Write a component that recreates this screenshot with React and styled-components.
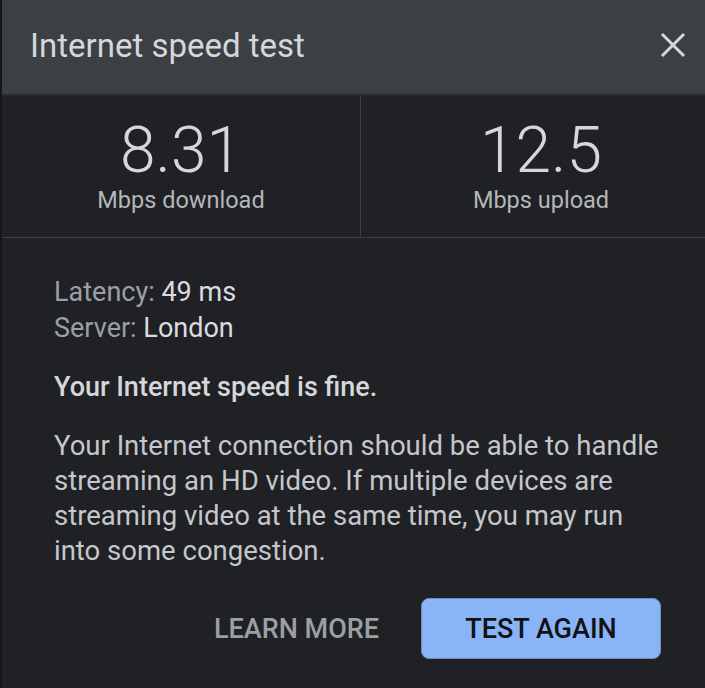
import React from 'react';
import styled, { createGlobalStyle } from 'styled-components';

const GlobalStyle = createGlobalStyle`
  html, body {
    margin: 0;
    padding: 0;
    background: #202124;
  }
  body {
    font-family: Roboto, "Liberation Sans", sans-serif;
  }
`;

const Panel = styled.div`
  width: 705px;
  height: 688px;
  box-sizing: border-box;
  border-left: 2px solid #161719;
  background: #202124;
  display: flex;
  flex-direction: column;
  overflow: hidden;
`;

const Header = styled.div`
  height: 96px;
  flex-shrink: 0;
  box-sizing: border-box;
  background: #3c4043;
  border-bottom: 2px solid #2a2b2e;
  display: flex;
  align-items: center;
  justify-content: space-between;
  padding: 0 12px 0 28px;
`;

const Title = styled.h1`
  margin: 0 0 4px;
  font-size: 33px;
  font-weight: 400;
  color: #d5d7db;
`;

const CloseButton = styled.button`
  width: 40px;
  height: 40px;
  border: none;
  background: transparent;
  padding: 0;
  display: flex;
  align-items: center;
  justify-content: center;
  margin-bottom: 4px;
`;

const Stats = styled.div`
  display: grid;
  grid-template-columns: 359px 360px;
  height: 142px;
  flex-shrink: 0;
  box-sizing: border-box;
  border-bottom: 1px solid #3c4043;
`;

const Stat = styled.div`
  display: flex;
  flex-direction: column;
  align-items: center;
  padding-top: 20px;
  border-right: ${(p) => (p.divider ? '1px solid #3c4043' : 'none')};
`;

const Value = styled.div`
  font-size: 64px;
  font-weight: 300;
  line-height: 70px;
  color: #d5d7db;
`;

const Unit = styled.div`
  font-size: 23.5px;
  line-height: 28px;
  color: #b4b7bb;
`;

const Body = styled.div`
  padding: 36px 30px 0 52px;
  display: flex;
  flex-direction: column;
`;

const InfoLine = styled.div`
  font-size: 27px;
  line-height: 36px;
  color: #9aa0a6;
`;

const InfoValue = styled.span`
  color: #dadce0;
`;

const Verdict = styled.p`
  margin: 24px 0 0;
  font-size: 27px;
  font-weight: 500;
  line-height: 35px;
  color: #d5d7db;
`;

const Description = styled.p`
  margin: 23px 0 0;
  font-size: 27.5px;
  line-height: 35px;
  color: #c4c7cb;
`;

const Actions = styled.div`
  display: flex;
  justify-content: flex-end;
  align-items: center;
  gap: 42px;
  margin-top: 30px;
  padding-right: 14px;
`;

const TextButton = styled.button`
  border: none;
  background: transparent;
  padding: 0;
  font-family: inherit;
  font-size: 27px;
  font-weight: 500;
  color: #9aa0a6;
`;

const PrimaryButton = styled.button`
  width: 240px;
  height: 61px;
  border: 1px solid #6f8fc4;
  border-radius: 8px;
  background: #8ab4f8;
  font-family: inherit;
  font-size: 27px;
  font-weight: 500;
  color: #111214;
`;

export default function App() {
  return (
    <>
      <GlobalStyle />
      <Panel>
        <Header>
          <Title>Internet speed test</Title>
          <CloseButton aria-label="Close">
            <svg width="26" height="26" viewBox="0 0 26 26">
              <path d="M2 2 L24 24 M24 2 L2 24" stroke="#d5d7db" strokeWidth="3" />
            </svg>
          </CloseButton>
        </Header>
        <Stats>
          <Stat divider>
            <Value>8.31</Value>
            <Unit>Mbps download</Unit>
          </Stat>
          <Stat>
            <Value>12.5</Value>
            <Unit>Mbps upload</Unit>
          </Stat>
        </Stats>
        <Body>
          <InfoLine>
            Latency: <InfoValue>49 ms</InfoValue>
          </InfoLine>
          <InfoLine>
            Server: <InfoValue>London</InfoValue>
          </InfoLine>
          <Verdict>Your Internet speed is fine.</Verdict>
          <Description>
            Your Internet connection should be able to handle streaming an HD video. If multiple
            devices are streaming video at the same time, you may run into some congestion.
          </Description>
          <Actions>
            <TextButton>LEARN MORE</TextButton>
            <PrimaryButton>TEST AGAIN</PrimaryButton>
          </Actions>
        </Body>
      </Panel>
    </>
  );
}
